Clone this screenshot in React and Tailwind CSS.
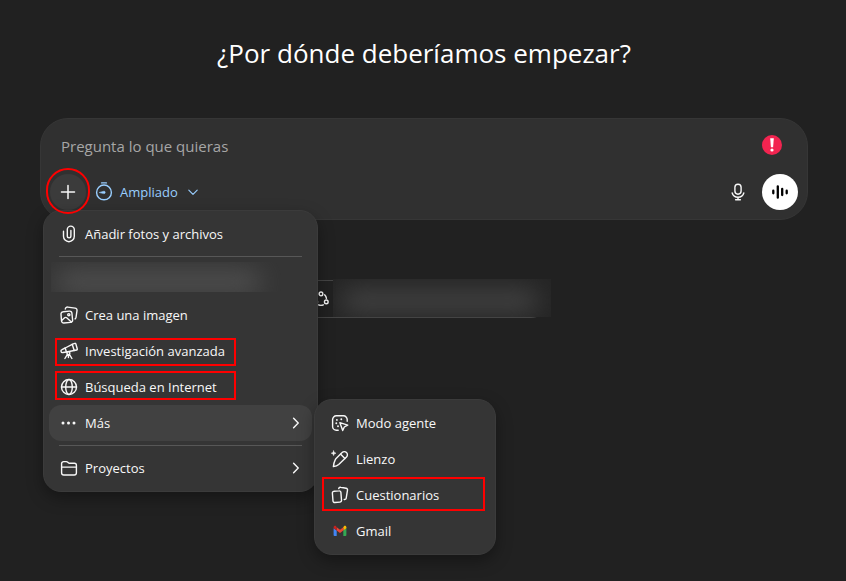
import React from "react";

const stroke = {
  fill: "none",
  stroke: "currentColor",
  strokeWidth: 1.4,
  strokeLinecap: "round",
  strokeLinejoin: "round",
};

function Icon({ className = "size-5", children, ...rest }) {
  return (
    <svg viewBox="0 0 20 20" aria-hidden="true" className={`shrink-0 ${className}`} {...stroke} {...rest}>
      {children}
    </svg>
  );
}

const PaperclipIcon = () => (
  <Icon>
    <path d="M4.500 7.200v5.100a5.400 5.400 0 0 0 10.800 0V5.600a3.500 3.500 0 0 0-7 0v6.500a1.800 1.800 0 0 0 3.600 0V6.400" />
  </Icon>
);

const ImagesIcon = () => (
  <Icon>
    <path d="M4.200 6.700l6.300-.6a2.200 2.200 0 0 1 2.400 2l.7 6.900a2.200 2.200 0 0 1-2 2.400l-6.700.6a2.200 2.200 0 0 1-2.400-2L2 9.100a2.200 2.200 0 0 1 2.200-2.400z" />
    <path d="M6.300 4a2.200 2.200 0 0 1 2.500-1.900l7.300 1a2.200 2.200 0 0 1 1.900 2.500l-1 6.900a2 2 0 0 1-.9 1.400" />
    <path d="M2.700 15.400l2.900-2.600c.6-.5 1.500-.5 2.100 0l4.700 4.200" />
    <circle cx="9.800" cy="9.700" r="1.100" />
  </Icon>
);

const TelescopeIcon = () => (
  <Icon>
    <path d="M13.200 3.300l2.500-1a.8.8 0 0 1 1.100.5l1.500 5.200a.8.8 0 0 1-.6 1l-2.500.5z" />
    <path d="M13.200 3.300L6.200 7l1.200 4 7.800-1.500" />
    <path d="M6.200 7L3 8.600a1.400 1.400 0 0 0 1 2.900l3.400-.5" />
    <circle cx="9.400" cy="12.100" r="1.500" />
    <path d="M8.400 13.300L5.900 17.500M10.400 13.300l2.500 4.200M9.400 13.800v2.800" />
  </Icon>
);

const GlobeIcon = () => (
  <Icon>
    <circle cx="10" cy="10" r="7.500" />
    <ellipse cx="10" cy="10" rx="3.300" ry="7.500" />
    <path d="M2.500 10h15" />
  </Icon>
);

const DotsIcon = () => (
  <Icon stroke="none" fill="currentColor">
    <circle cx="4" cy="10" r="1.500" />
    <circle cx="9.500" cy="10" r="1.500" />
    <circle cx="15" cy="10" r="1.500" />
  </Icon>
);

const FolderIcon = () => (
  <Icon>
    <path d="M2.600 14.800V5.600a2 2 0 0 1 2-2h2.700c.6 0 1.100.2 1.500.6l.5.5c.3.300.7.5 1.200.5h4.900a2 2 0 0 1 2 2v7.600a2.200 2.200 0 0 1-2.200 2.200H4.800a2.200 2.200 0 0 1-2.200-2.200z" />
    <path d="M2.600 9.100h14.800" />
  </Icon>
);

const AgentIcon = () => (
  <Icon>
    <path d="M8.200 17.200H6.300a3.700 3.700 0 0 1-3.700-3.700V6.500a3.700 3.700 0 0 1 3.700-3.700h7.200a3.700 3.700 0 0 1 3.700 3.700v1.800" />
    <path d="M9.900 9.700l7.800 2.500-3.400 1.800-1.600 3.500z" />
    <path d="M6.900 6.900h.01M11.300 6.300h.01M6.300 10.300h.01M8 13.200h.01" strokeWidth="1.900" />
  </Icon>
);

const CanvasIcon = () => (
  <Icon>
    <path d="M6.600 8.900l5.500-5.300a3 3 0 0 1 4.400 0 3 3 0 0 1 0 4.300L8.700 15.600c-1.200 1.100-3.200 1.800-5.300 2 .2-2.400.8-4.700 1.800-6.700.3-.7.800-1.400 1.400-2z" />
    <path d="M10.700 5.300l4.200 4.200" />
    <path d="M3.600 1.900l.6 1.700 1.700.6-1.700.6-.6 1.700L3 4.800l-1.700-.6L3 3.600z" fill="currentColor" strokeWidth=".6" />
  </Icon>
);

const CardsIcon = () => (
  <Icon>
    <path d="M4 6.300l5-.4a1.700 1.700 0 0 1 1.900 1.500l.6 7.800a1.700 1.700 0 0 1-1.600 1.900l-5 .4A1.700 1.700 0 0 1 3 16l-.6-7.800A1.700 1.700 0 0 1 4 6.300z" />
    <path d="M8.700 3.600a1.700 1.700 0 0 1 2-1.300l5.400.9a1.700 1.700 0 0 1 1.400 2l-1.300 7.900a1.700 1.700 0 0 1-2 1.400" />
  </Icon>
);

const GmailIcon = () => (
  <Icon stroke="none">
    <path d="M4.500 14.900h2.200V9.500L3.600 7.200v6.800a.9.900 0 0 0 .9.900z" fill="#4285f4" />
    <path d="M13.300 14.900h2.200a.9.900 0 0 0 .9-.9V7.200l-3.100 2.300z" fill="#34a853" />
    <path d="M13.300 6.200v3.300l3.100-2.300v-.9c0-1.200-1.300-1.900-2.300-1.200z" fill="#fbbc04" />
    <path d="M6.700 9.500V6.200L10 8.700l3.300-2.500v3.300L10 12z" fill="#ea4335" />
    <path d="M3.600 6.300v.9l3.100 2.300V6.200l-.8-1.100c-1-.7-2.300 0-2.300 1.200z" fill="#c5221f" />
  </Icon>
);

const PlusIcon = () => (
  <Icon strokeWidth="1.500">
    <path d="M10 3.500v13M3.500 10h13" />
  </Icon>
);

const TimerIcon = () => (
  <Icon className="size-5">
    <circle cx="10" cy="10.400" r="7.400" />
    <path d="M7.600 .9h4.800" />
    <path d="M5.600 10.400l4.400-1.200a1.200 1.200 0 1 1 0 2.400z" fill="currentColor" strokeWidth=".6" />
  </Icon>
);

const ChevronDownIcon = () => (
  <Icon className="size-3" strokeWidth="1.900">
    <path d="M3 7l7 7 7-7" />
  </Icon>
);

const ChevronRightIcon = () => (
  <Icon className="size-4" strokeWidth="1.800">
    <path d="M7 4.200l5.800 5.800L7 15.800" />
  </Icon>
);

const MicIcon = () => (
  <Icon>
    <rect x="6.900" y="2.200" width="6.200" height="10" rx="3.100" />
    <path d="M4.200 11c.7 2.600 3 4.300 5.800 4.300s5.100-1.700 5.800-4.300M10 15.300v2.400M7.600 17.800h4.800" />
  </Icon>
);

const VoiceIcon = () => (
  <Icon strokeWidth="2.300">
    <path d="M3.300 8.700v2.600M7.800 4.300v11.400M12.200 6.900v6.200M16.700 8.700v2.600" />
  </Icon>
);

const ConnectIcon = () => (
  <Icon className="size-4" strokeWidth="1.700">
    <circle cx="10" cy="3.600" r="2.300" />
    <circle cx="16.600" cy="13.600" r="2.300" />
    <circle cx="3.400" cy="13.600" r="2.300" />
    <path d="M14.500 4.800a7.500 7.500 0 0 1 2.300 4.400M5.500 4.800a7.500 7.500 0 0 0-2.300 4.400M7 17.300a8 8 0 0 0 6 0" />
  </Icon>
);

function MenuItem({ icon, label, active, submenu, mark }) {
  return (
    <li className="relative">
      <button
        type="button"
        aria-haspopup={submenu ? "menu" : undefined}
        className={`flex h-9 w-full items-center gap-1.5 rounded-xl pr-2 pl-2.5 text-left ${active ? "bg-[#414141]" : ""}`}
      >
        {icon}
        <span className="grow whitespace-nowrap">{label}</span>
        {submenu && <ChevronRightIcon />}
      </button>
      {mark && <span className={`pointer-events-none absolute border-2 border-[#fe0000] ${mark}`} />}
    </li>
  );
}

const Divider = () => <li role="separator" className="mx-2.5 my-1 h-px bg-[#575757]" />;

const panel =
  "absolute rounded-[18px] border border-[#3b3b3b] bg-[#353535] p-[5px] shadow-[0_6px_16px_rgba(0,0,0,0.35)]";

function AddMenu() {
  return (
    <div className={`${panel} top-9 -left-[7px] z-10 w-[275px]`}>
      <ul>
        <MenuItem icon={<PaperclipIcon />} label="Añadir fotos y archivos" />
        <Divider />
        <li className="h-9 pt-px">
          <div className="ml-0.5 h-[30px] w-[230px] overflow-hidden bg-[#353535] px-1 py-2">
            <div className="h-6 w-[206px] rounded-full bg-[#4f4f4f] blur-[12px]" />
          </div>
        </li>
        <MenuItem icon={<ImagesIcon />} label="Crea una imagen" />
        <MenuItem icon={<TelescopeIcon />} label="Investigación avanzada" mark="top-[5px] left-1.5 h-7 w-[181px]" />
        <MenuItem icon={<GlobeIcon />} label="Búsqueda en Internet" mark="top-0.5 left-1.5 h-[29px] w-[181px]" />
        <MenuItem icon={<DotsIcon />} label="Más" active submenu />
        <Divider />
        <MenuItem icon={<FolderIcon />} label="Proyectos" submenu />
      </ul>
      <div className={`${panel} top-[188px] left-[270px] w-[182px]`}>
        <ul>
          <MenuItem icon={<AgentIcon />} label="Modo agente" />
          <MenuItem icon={<CanvasIcon />} label="Lienzo" />
          <MenuItem icon={<CardsIcon />} label="Cuestionarios" mark="top-0 left-0.5 h-[34px] w-[163px]" />
          <MenuItem icon={<GmailIcon />} label="Gmail" />
        </ul>
      </div>
    </div>
  );
}

function Composer() {
  return (
    <form className="w-full rounded-[28px] border border-[#363636] bg-[#303030] px-[9px] pb-[9px]">
      <div className="flex h-[55px] items-center pr-4 pb-[3px] pl-[11px]">
        <input
          type="text"
          aria-label="Pregunta lo que quieras"
          placeholder="Pregunta lo que quieras"
          className="min-w-0 grow bg-transparent pt-0.5 text-[15px] text-white outline-none placeholder:text-[#a6a6a6]"
        />
        <svg viewBox="0 0 20 20" role="img" aria-label="Aviso" className="size-5 shrink-0">
          <circle cx="10" cy="10" r="10" fill="#f22450" />
          <path d="M8.200 3.200h3.600l-.7 9H8.900z" fill="#fff" />
          <circle cx="10" cy="15" r="1.600" fill="#fff" />
        </svg>
      </div>
      <div className="flex items-center">
        <div className="relative">
          <button type="button" aria-label="Añadir" className="grid size-9 place-items-center rounded-full bg-[#3b3b3b]">
            <PlusIcon />
          </button>
          <AddMenu />
          <span className="pointer-events-none absolute -inset-x-1 -top-[6px] z-20 h-[46px] rounded-full border-2 border-[#fe0000]" />
        </div>
        <button type="button" className="flex h-9 items-center gap-1.5 px-2 text-[#99ceff]">
          <TimerIcon />
          <span className="mr-[3px]">Ampliado</span>
          <ChevronDownIcon />
        </button>
        <div className="ml-auto flex items-center gap-1.5">
          <button type="button" aria-label="Dictar" className="grid size-9 place-items-center">
            <MicIcon />
          </button>
          <button type="button" aria-label="Modo de voz" className="grid size-9 place-items-center rounded-full bg-white text-black">
            <VoiceIcon />
          </button>
        </div>
      </div>
    </form>
  );
}

export default function App() {
  return (
    <main className="min-h-screen bg-[#212121] pt-[31px] pr-[38px] pl-10 font-['Open_Sans','Noto_Sans',sans-serif] text-[13px] leading-5 text-[#f8f8f8]">
      <div className="mx-auto flex max-w-3xl flex-col items-center">
        <h1 className="mb-[43px] text-[26px] leading-[44px] text-white">¿Por dónde deberíamos empezar?</h1>
        <Composer />
        <div className="relative mt-[60px] flex h-[38px] w-[252px] items-center rounded-full border border-[#444444] px-3.5">
          <ConnectIcon />
          <div className="absolute -top-0.5 left-[34px] h-[38px] w-[218px] overflow-hidden bg-[#252525] px-2 py-2.5">
            <div className="h-6 w-[198px] rounded-full bg-[#424242] blur-[12px]" />
          </div>
        </div>
      </div>
    </main>
  );
}
